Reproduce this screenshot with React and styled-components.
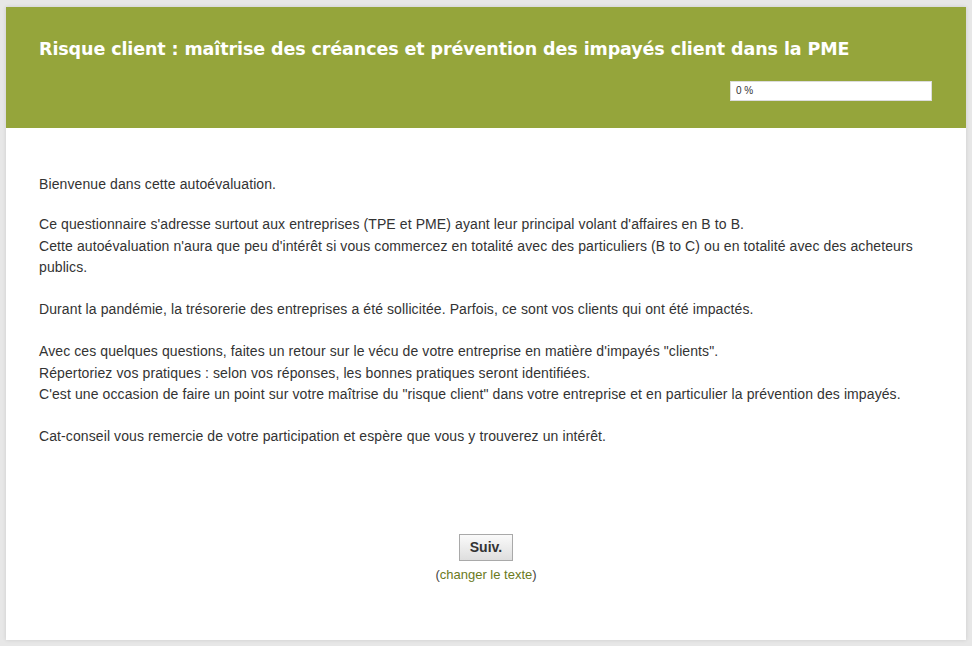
import React from 'react';
import styled, { createGlobalStyle } from 'styled-components';

const GlobalStyle = createGlobalStyle`
    html, body {
        margin: 0;
        padding: 0;
        background: #e7e7e7;
    }
    body {
        font-family: "Liberation Sans", Arial, sans-serif;
    }
`;

const Page = styled.div`
    padding: 7px 6px 6px 6px;
    height: 646px;
    box-sizing: border-box;
`;

const Card = styled.div`
    background: #fff;
    height: 633px;
    box-shadow: 0 0 4px rgba(0, 0, 0, 0.12);
    display: flex;
    flex-direction: column;
`;

const Header = styled.header`
    background: #95a53b;
    height: 121px;
    box-sizing: border-box;
    padding: 30px 34px 0 33px;
    display: flex;
    flex-direction: column;
`;

const Title = styled.h1`
    margin: 0;
    color: #fff;
    font-family: "DejaVu Sans", Verdana, sans-serif;
    font-weight: bold;
    font-size: 17.5px;
    line-height: 24px;
    letter-spacing: -0.1px;
`;

const Progress = styled.div`
    align-self: flex-end;
    margin-top: 20px;
    width: 195px;
    height: 18px;
    background: #fff;
    border: 1px solid #dcdcdc;
    font-size: 10px;
    line-height: 18px;
    color: #333;
    padding-left: 5px;
`;

const Body = styled.main`
    padding: 46px 33px 0 33px;
    color: #333;
    font-size: 14px;
    line-height: 21.3px;
    letter-spacing: 0.1px;
`;

const Para = styled.p`
    margin: 0 0 ${props => (props.$tight ? '19px' : '21px')} 0;
`;

const Footer = styled.div`
    margin-top: 86px;
    display: flex;
    flex-direction: column;
    align-items: center;
    gap: 6px;
    letter-spacing: 0;
`;

const Button = styled.button`
    font-family: "Liberation Sans", Arial, sans-serif;
    font-weight: bold;
    font-size: 14px;
    color: #333;
    width: 54px;
    height: 27px;
    padding: 0;
    border: 1px solid #a9a9a9;
    border-radius: 0;
    background: linear-gradient(#fafafa, #dedede);
    cursor: pointer;
`;

const Note = styled.div`
    font-size: 13px;
    line-height: 16px;
    color: #444;
`;

const Link = styled.a`
    color: #6b7a1c;
    text-decoration: none;
`;

const App = () => {
    return (
        <>
            <GlobalStyle />
            <Page>
                <Card>
                    <Header>
                        <Title>Risque client : maîtrise des créances et prévention des impayés client dans la PME</Title>
                        <Progress>0 %</Progress>
                    </Header>
                    <Body>
                        <Para $tight>Bienvenue dans cette autoévaluation.</Para>
                        <Para>
                            Ce questionnaire s'adresse surtout aux entreprises (TPE et PME) ayant leur principal volant d'affaires en B to B.<br />
                            Cette autoévaluation n'aura que peu d'intérêt si vous commercez en totalité avec des particuliers (B to C) ou en totalité avec des acheteurs publics.
                        </Para>
                        <Para>Durant la pandémie, la trésorerie des entreprises a été sollicitée. Parfois, ce sont vos clients qui ont été impactés.</Para>
                        <Para>
                            Avec ces quelques questions, faites un retour sur le vécu de votre entreprise en matière d'impayés "clients".<br />
                            Répertoriez vos pratiques : selon vos réponses, les bonnes pratiques seront identifiées.<br />
                            C'est une occasion de faire un point sur votre maîtrise du "risque client" dans votre entreprise et en particulier la prévention des impayés.
                        </Para>
                        <Para>Cat-conseil vous remercie de votre participation et espère que vous y trouverez un intérêt.</Para>
                        <Footer>
                            <Button>Suiv.</Button>
                            <Note>(<Link href="#">changer le texte</Link>)</Note>
                        </Footer>
                    </Body>
                </Card>
            </Page>
        </>
    );
};

export default App;
